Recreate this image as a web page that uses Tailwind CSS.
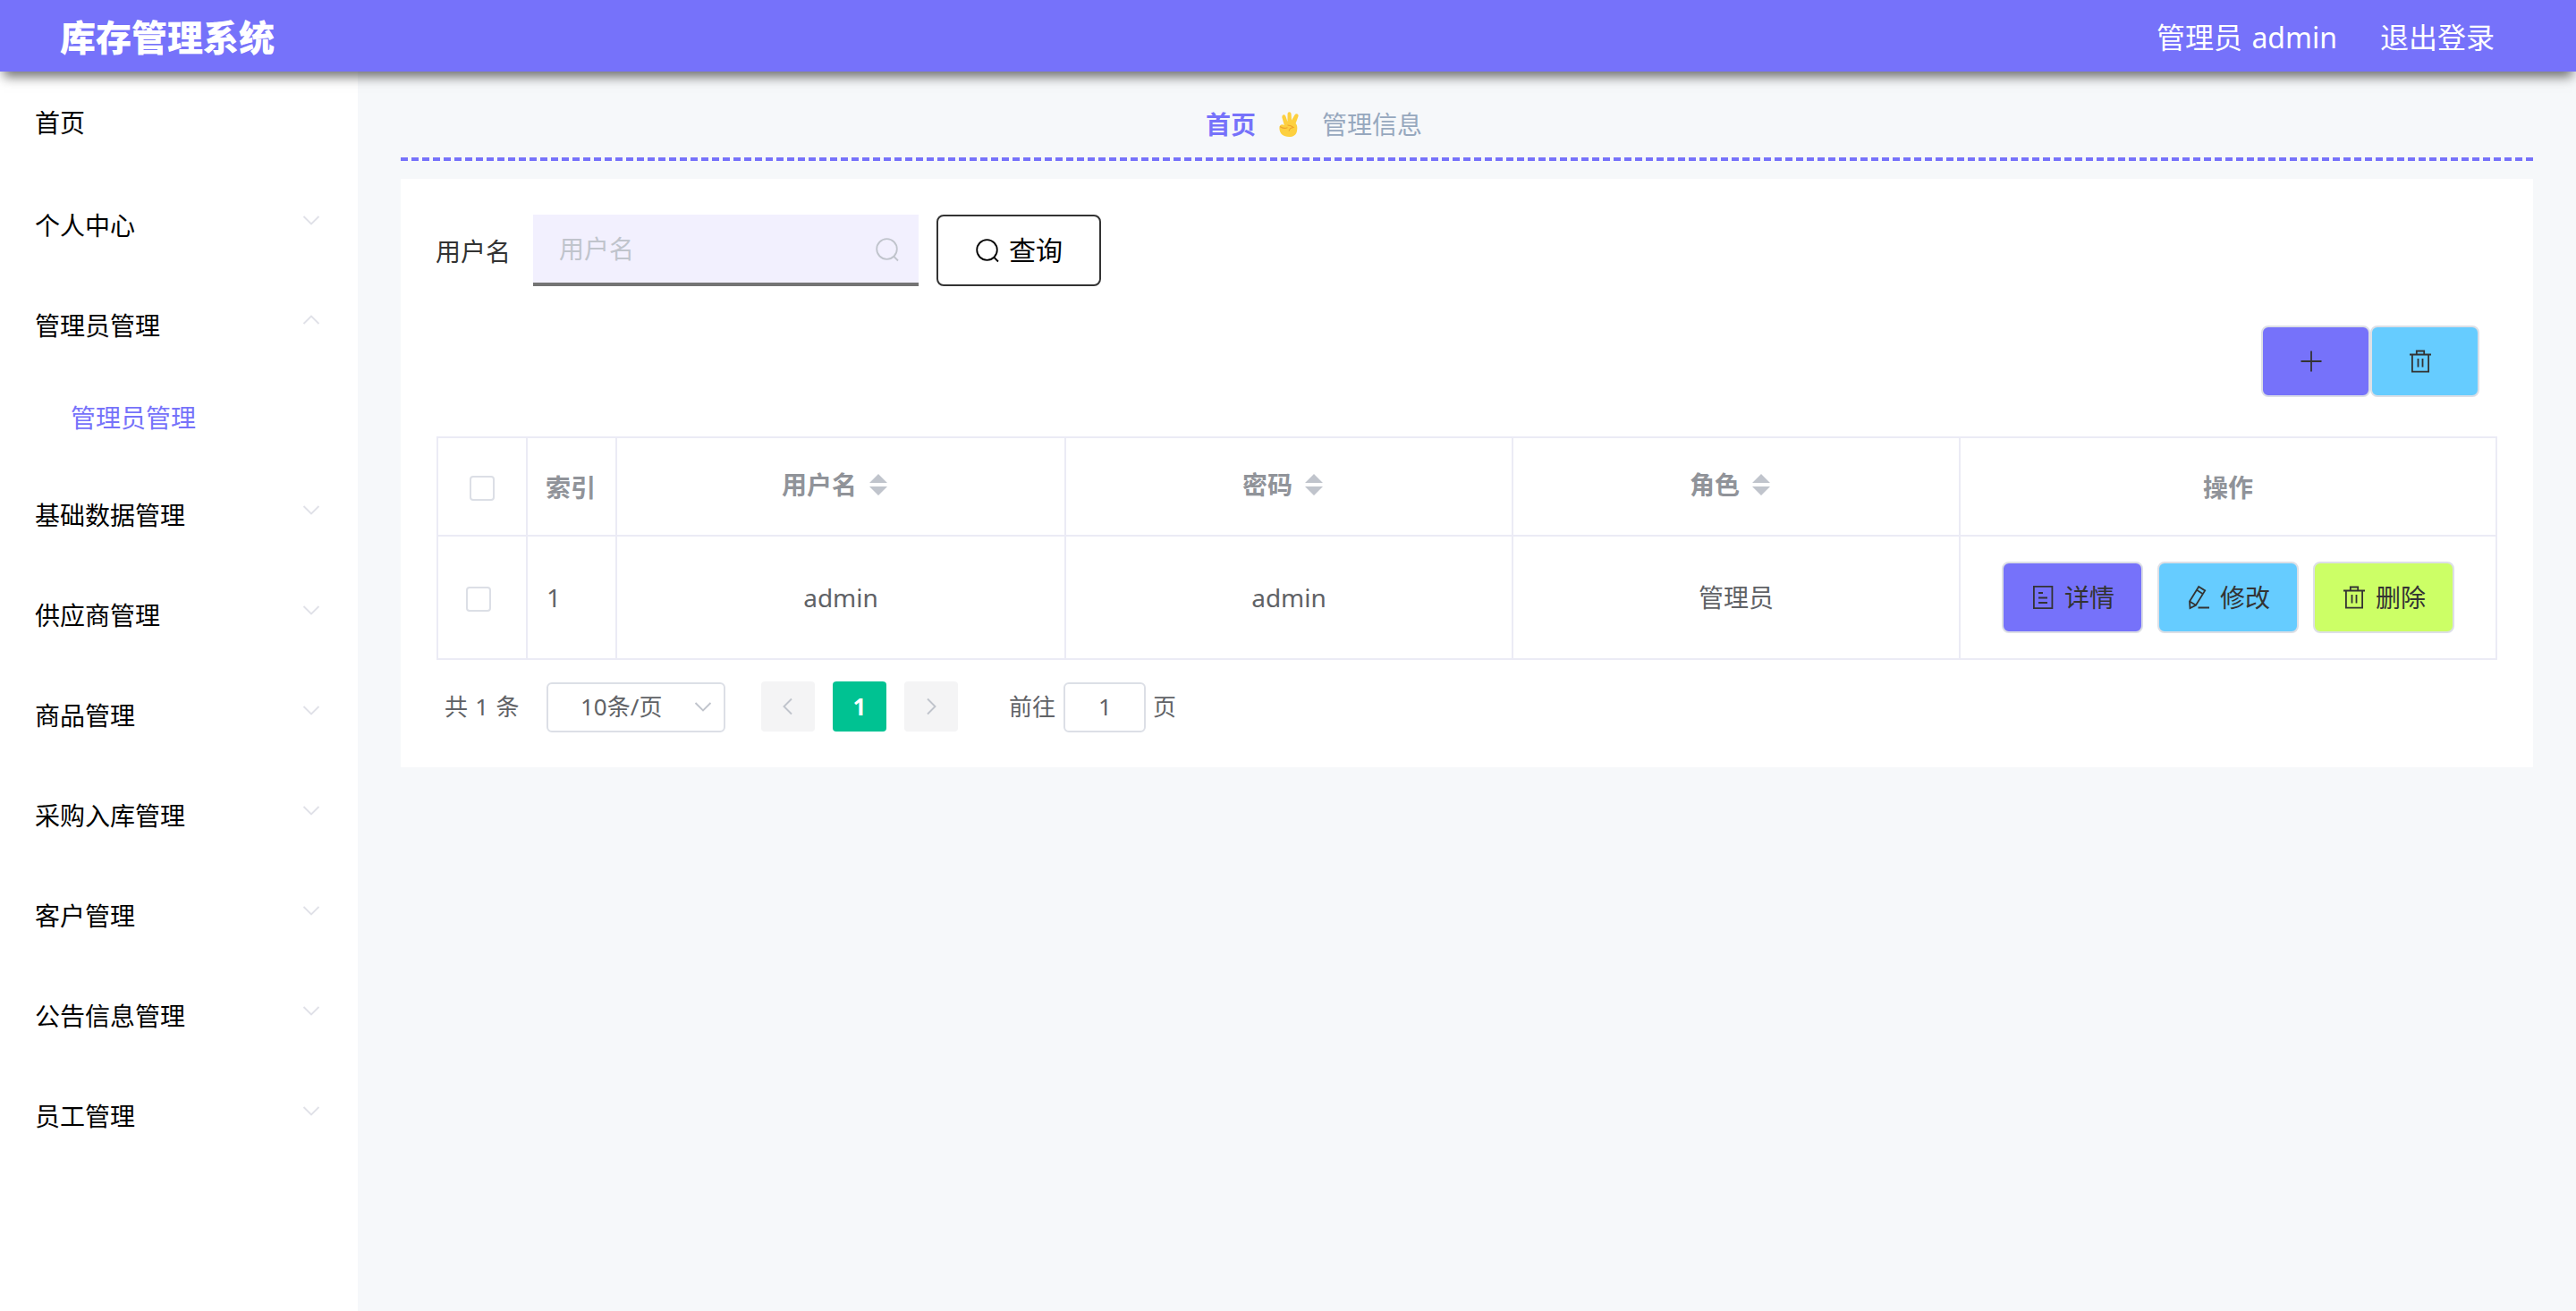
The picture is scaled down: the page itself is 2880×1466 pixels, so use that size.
<!DOCTYPE html>
<html lang="zh-CN">
<head>
<meta charset="utf-8">
<title>库存管理系统</title>
<script src="https://cdn.jsdelivr.net/npm/@tailwindcss/browser@4"></script>
</head>
<body class="w-[2880px] h-[1466px] overflow-hidden bg-[#f6f8fa] text-[28px] leading-none text-[#606266] font-['Noto_Sans','Noto_Sans_CJK_SC',sans-serif]">
<svg class="hidden">
  <symbol id="down" viewBox="0 0 24 24"><path d="M3.5 8 12 16.5 20.500 8" fill="none" stroke="currentColor" stroke-width="1.900"/></symbol>
  <symbol id="search" viewBox="0 0 28 28"><g fill="none" stroke="currentColor" stroke-width="1.800"><circle cx="13.500" cy="13.500" r="11.300"/><path d="m21 21.500 5 5"/></g></symbol>
  <symbol id="bin" viewBox="0 0 28 28"><path d="M2 6.500h24M9.800 6V2.500h8.400V6M4.900 6.500v19.200h18.200V6.500M11.500 11v9.500M16.500 11v9.500" fill="none" stroke="currentColor" stroke-width="1.800"/></symbol>
  <symbol id="sort" viewBox="0 0 20 24"><path d="M10 0 20 10H0zM0 14h20L10 24z" fill="currentColor"/></symbol>
</svg>

<header class="relative z-10 flex h-20 items-center justify-between bg-[#7672fa] pl-[67px] pr-[91px] text-white shadow-[0_10px_12px_-4px_rgba(0,0,0,0.55)]">
  <h1 class="pt-1 text-[40px] font-black leading-none">库存管理系统</h1>
  <div class="flex gap-12 pt-[3px] text-[32px]"><span class="[word-spacing:2px]">管理员 admin</span><span>退出登录</span></div>
</header>

<div class="flex h-[1386px]">
  <nav class="w-[400px] shrink-0 bg-white text-black">
    <div class="mb-1 flex h-28 items-center pt-0.5 pl-[39px]">首页</div>
    <div class="flex h-28 items-center justify-between pl-[39px] pr-10"><span>个人中心</span><svg class="mb-3 size-6 text-[#e0e1e8]"><use href="#down"/></svg></div>
    <div class="flex h-28 items-center justify-between pl-[39px] pr-10"><span>管理员管理</span><svg class="mb-3 size-6 rotate-180 text-[#e0e1e8]"><use href="#down"/></svg></div>
    <div class="flex h-[100px] items-center pb-1.5 pl-[79px] text-[#7672fa]">管理员管理</div>
    <div class="flex h-28 items-center justify-between pl-[39px] pr-10"><span>基础数据管理</span><svg class="mb-3 size-6 text-[#e0e1e8]"><use href="#down"/></svg></div>
    <div class="flex h-28 items-center justify-between pl-[39px] pr-10"><span>供应商管理</span><svg class="mb-3 size-6 text-[#e0e1e8]"><use href="#down"/></svg></div>
    <div class="flex h-28 items-center justify-between pl-[39px] pr-10"><span>商品管理</span><svg class="mb-3 size-6 text-[#e0e1e8]"><use href="#down"/></svg></div>
    <div class="flex h-28 items-center justify-between pl-[39px] pr-10"><span>采购入库管理</span><svg class="mb-3 size-6 text-[#e0e1e8]"><use href="#down"/></svg></div>
    <div class="flex h-28 items-center justify-between pl-[39px] pr-10"><span>客户管理</span><svg class="mb-3 size-6 text-[#e0e1e8]"><use href="#down"/></svg></div>
    <div class="flex h-28 items-center justify-between pl-[39px] pr-10"><span>公告信息管理</span><svg class="mb-3 size-6 text-[#e0e1e8]"><use href="#down"/></svg></div>
    <div class="flex h-28 items-center justify-between pl-[39px] pr-10"><span>员工管理</span><svg class="mb-3 size-6 text-[#e0e1e8]"><use href="#down"/></svg></div>
  </nav>

  <main class="flex-1 pl-12 pr-12">
    <div class="flex h-[100px] items-center justify-center border-b-4 border-dashed border-[#7672fa] pr-[342px] pt-[22px]">
      <b class="text-[#7672fa]">首页</b>
      <svg class="mx-[26px] h-7 w-[22px]" viewBox="0 0 22 28">
        <path d="M5.800 15 3.400 6.500C2.800 3.200 6.300 1.800 7.300 4.800L9.500 11V2.800C9.500-.5 13.500-.5 13.600 2.800L14 9.500l3.500-6c1.500-2.300 4.700-1 4 1.500L18.600 13c2 2.200 2 5.500 1.300 9-1 4-4 6-8.700 6C4.500 28 .7 24.500.4 18.500.3 15 2.800 13.300 5.800 15z" fill="#fdd03f"/>
        <path d="M1 16.500c2.500 2 5 2.500 8.500 1.200M9.500 15c3 .2 5 1 6.500 2.500-2.500.3-4.300 1.500-5 4" fill="none" stroke="#eea32c" stroke-width="1.100"/>
      </svg>
      <span class="text-[#97a8be]">管理信息</span>
    </div>

    <section class="mt-5 h-[658px] bg-white px-10 pt-10">
      <div class="flex h-20 items-center">
        <span class="-ml-px w-[109px] pt-0.5 text-[#333]">用户名</span>
        <div class="flex h-20 w-[431px] items-center justify-between border-b-4 border-[#747474] bg-[#f2f0fe] pl-[29px] pr-[21px] text-[#c0c4cc]"><span>用户名</span><svg class="mt-0.5 size-[28px]"><use href="#search"/></svg></div>
        <button class="ml-5 flex h-20 w-[184px] items-center justify-center gap-2.5 rounded-lg border-2 border-[#333] text-[30px] text-black"><svg class="size-[28px]"><use href="#search"/></svg><span>查询</span></button>
      </div>

      <div class="mt-11 flex justify-end pr-5 text-[#333]">
        <button class="h-20 w-[122px] rounded-lg border-2 border-[#dcdfe6] bg-[#7672fa] pl-10"><svg class="size-7" viewBox="0 0 28 28"><path d="M14 2.500v23M2.500 14h23" fill="none" stroke="currentColor" stroke-width="1.800"/></svg></button>
        <button class="h-20 w-[122px] rounded-lg border-2 border-[#dcdfe6] bg-[#66ccff] pl-10"><svg class="size-7"><use href="#bin"/></svg></button>
      </div>

      <table class="mt-11 w-[2304px] table-fixed border-separate border-spacing-0 border-l-2 border-t-2 border-[#ebebf5] text-center">
        <colgroup><col class="w-[100px]"><col class="w-[100px]"><col class="w-[502px]"><col class="w-[500px]"><col class="w-[500px]"><col class="w-[600px]"></colgroup>
        <thead class="text-[#909399]">
          <tr class="h-[110px]">
            <th class="border-b-2 border-r-2 border-[#ebebf5] p-0 pt-[3px]"><span class="mx-auto block size-7 rounded border-2 border-[#dcdfe6]"></span></th>
            <th class="border-b-2 border-r-2 border-[#ebebf5] p-0 pl-5 pt-0.5 text-left">索引</th>
            <th class="border-b-2 border-r-2 border-[#ebebf5] p-0 pb-1"><span class="flex items-center justify-center gap-[14px] pr-[14px]">用户名<svg class="h-6 w-5 text-[#c0c4cc]"><use href="#sort"/></svg></span></th>
            <th class="border-b-2 border-r-2 border-[#ebebf5] p-0 pb-1"><span class="flex items-center justify-center gap-[14px] pr-[14px]">密码<svg class="h-6 w-5 text-[#c0c4cc]"><use href="#sort"/></svg></span></th>
            <th class="border-b-2 border-r-2 border-[#ebebf5] p-0 pb-1"><span class="flex items-center justify-center gap-[14px] pr-[14px]">角色<svg class="h-6 w-5 text-[#c0c4cc]"><use href="#sort"/></svg></span></th>
            <th class="border-b-2 border-r-2 border-[#ebebf5] p-0 pt-0.5">操作</th>
          </tr>
        </thead>
        <tbody>
          <tr class="h-[138px]">
            <td class="border-b-2 border-r-2 border-[#ebebf5] p-0 pl-[31px]"><span class="mt-1 block size-7 rounded border-2 border-[#dcdfe6]"></span></td>
            <td class="border-b-2 border-r-2 border-[#ebebf5] p-0 pl-[21px] text-left">1</td>
            <td class="border-b-2 border-r-2 border-[#ebebf5] p-0">admin</td>
            <td class="border-b-2 border-r-2 border-[#ebebf5] p-0">admin</td>
            <td class="border-b-2 border-r-2 border-[#ebebf5] p-0">管理员</td>
            <td class="border-b-2 border-r-2 border-[#ebebf5] p-0">
              <div class="flex justify-center gap-4 text-[#333]">
                <button class="flex h-20 w-[158px] items-center gap-2.5 rounded-lg border-2 border-[#dcdfe6] bg-[#7672fa] pl-[30px]"><svg class="size-7" viewBox="0 0 28 28"><path d="M3.900 1.900h20.500v24.200H3.900zM9 9h5M9 14.500h10M9 20h10" fill="none" stroke="currentColor" stroke-width="1.800"/></svg>详情</button>
                <button class="flex h-20 w-[158px] items-center gap-2.5 rounded-lg border-2 border-[#dcdfe6] bg-[#66ccff] pl-[30px]"><svg class="size-7" viewBox="0 0 28 28"><path d="M4 18.500 14.200 2l7 4.400L11 22.700l-6.500 3.400zM12 5.800l7 4.400M4 18.500l7 4.200M13.500 25.500H26" fill="none" stroke="currentColor" stroke-width="1.800"/></svg>修改</button>
                <button class="flex h-20 w-[158px] items-center gap-2.5 rounded-lg border-2 border-[#dcdfe6] bg-[#ccff66] pl-[30px]"><svg class="size-7"><use href="#bin"/></svg>删除</button>
              </div>
            </td>
          </tr>
        </tbody>
      </table>

      <div class="mt-6 flex h-14 items-center pl-[9px] text-[26px]">
        <span class="w-[114px] [word-spacing:1.500px]">共 1 条</span>
        <div class="mt-0.5 flex h-14 w-[200px] items-center justify-between rounded-md border-2 border-[#dcdfe6] pb-0.5 pl-[36px] pr-[11px]"><span>10条/页</span><svg class="size-6 text-[#c0c4cc]"><use href="#down"/></svg></div>
        <button class="ml-10 flex h-14 w-[60px] items-center justify-center rounded bg-[#f4f4f5] text-[#c0c4cc]"><svg class="size-6 rotate-90"><use href="#down"/></svg></button>
        <button class="ml-5 h-14 w-[60px] rounded bg-[#00c292] font-bold text-white">1</button>
        <button class="ml-5 flex h-14 w-[60px] items-center justify-center rounded bg-[#f4f4f5] text-[#c0c4cc]"><svg class="size-6 -rotate-90"><use href="#down"/></svg></button>
        <span class="ml-[57px]">前往</span>
        <div class="ml-[9px] mt-0.5 flex h-14 w-[92px] items-center justify-center rounded-md border-2 border-[#dcdfe6] pb-0.5 pl-px">1</div>
        <span class="ml-2">页</span>
      </div>
    </section>
  </main>
</div>
</body>
</html>
